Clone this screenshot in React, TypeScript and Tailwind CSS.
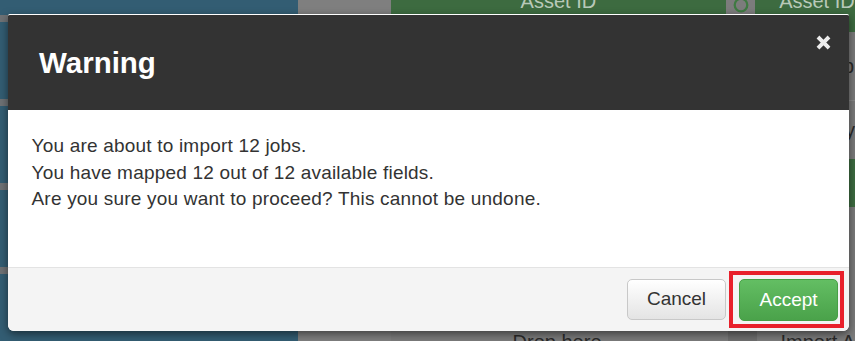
const FONT = "font-['Liberation_Sans',Arial,sans-serif]"

function CloseIcon() {
  return (
    <svg viewBox="0 0 16 16" className="h-[15px] w-[15px]" aria-hidden>
      <path
        d="M3.6 3.6 L12.4 12.4 M12.4 3.6 L3.6 12.4"
        stroke="currentColor"
        strokeWidth="4.2"
        strokeLinecap="square"
        fill="none"
      />
    </svg>
  )
}

function LinkBadge() {
  return (
    <div className="flex h-[30px] w-[29px] items-center justify-center bg-[#7c7c7c]">
      <svg viewBox="0 0 20 20" className="h-[18px] w-[18px] text-[#3f7a42]" aria-hidden>
        <circle cx="10" cy="10" r="7" stroke="currentColor" strokeWidth="2.5" fill="none" />
      </svg>
    </div>
  )
}

function Backdrop() {
  return (
    <div className={`flex h-full w-full ${FONT}`}>
      <aside className="flex w-[300px] flex-col gap-[77px] bg-[#335d73] pt-[15px]">
        <div className="h-[7px] w-[8px] bg-[#6f7275]" />
        <div className="h-[7px] w-[8px] bg-[#6f7275]" />
        <div className="h-[7px] w-[8px] bg-[#6f7275]" />
        <div className="h-[7px] w-[8px] bg-[#6f7275]" />
      </aside>
      <div className="w-[93px] bg-[#7f7f7f]" />
      <main className="flex flex-1 flex-col bg-[#7b7b7b]">
        <div className="flex h-[32px] items-start whitespace-nowrap bg-[#3d6b40] text-[#b8c9b9]">
          <span className="ml-[130px] -mt-[9px] text-[20px] leading-[20px]">Asset ID</span>
          <div className="ml-[130px] -mt-[10px]">
            <LinkBadge />
          </div>
          <span className="ml-[24px] -mt-[9px] text-[20px] leading-[20px]">Asset ID</span>
        </div>
        <div className="flex flex-1 flex-col text-[#2a2a2a]">
          <div className="flex h-[68px] items-center justify-end pr-[1px] text-[20px]">p</div>
          <div className="h-[1px] bg-[#8a8a8a]" />
          <div className="flex h-[58px] items-center justify-end text-[20px]">ty</div>
          <div className="h-[48px] bg-[#3d6b40]" />
          <div className="flex flex-1 items-end whitespace-nowrap text-[20px]">
            <span className="ml-[122px] -mb-[11px] leading-[20px]">Drop here</span>
            <div className="ml-[126px] -mb-[12px] h-[22px] w-[29px] bg-[#6e6e6e]" />
            <span className="ml-[24px] -mb-[11px] leading-[20px]">Import A</span>
          </div>
        </div>
      </main>
    </div>
  )
}

export default function App() {
  return (
    <div className="relative h-[341px] w-[855px] overflow-hidden bg-[#7b7b7b]">
      <Backdrop />

      <div
        className={`absolute left-[8px] top-[14px] w-[841px] overflow-hidden rounded-b-[6px] rounded-t-[2px] border-t border-white bg-white shadow-[0_3px_9px_rgba(0,0,0,0.5)] ${FONT}`}
      >
        <div className="flex h-[95px] justify-between bg-[#333333] pl-[31px] pr-[18px]">
          <h2 className="self-center text-[29.5px] font-bold leading-[34px] text-white">Warning</h2>
          <button className="mt-[20px] self-start text-[#ececec]">
            <CloseIcon />
          </button>
        </div>

        <div className="h-[157px] pl-[23.5px] pt-[23px] text-[19px] leading-[26.7px] tracking-[0.2px] text-[#333333]">
          <p>You are about to import 12 jobs.</p>
          <p>You have mapped 12 out of 12 available fields.</p>
          <p>Are you sure you want to proceed? This cannot be undone.</p>
        </div>

        <div className="flex h-[64px] items-center justify-end gap-[3px] border-t border-[#e3e3e3] bg-[#f4f4f4] pr-[5px]">
          <button className="h-[41px] w-[99px] rounded-[5px] border border-[#c8c8c8] bg-gradient-to-b from-white to-[#e4e4e4] text-[19px] text-[#333333] shadow-[inset_0_1px_0_rgba(255,255,255,0.8)]">
            Cancel
          </button>
          <div className="border-4 border-[#e8202b] pb-[3px] pl-[6px] pr-[2px] pt-[4px]">
            <button className="h-[42px] w-[99px] rounded-[5px] border border-[#46a046] bg-gradient-to-b from-[#63be63] to-[#4aa24a] text-[19px] text-white">
              Accept
            </button>
          </div>
        </div>
      </div>
    </div>
  )
}
